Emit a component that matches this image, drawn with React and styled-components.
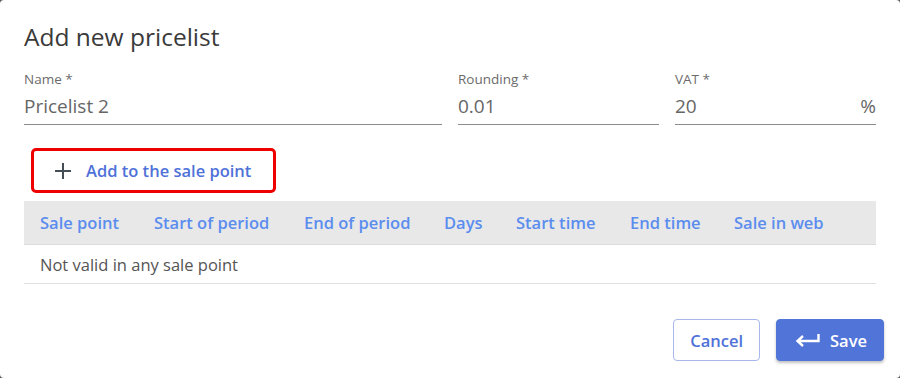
import React from 'react';
import styled, {createGlobalStyle} from 'styled-components';

const GlobalStyle = createGlobalStyle`
    html, body {
        margin: 0;
        padding: 0;
        background: #555;
    }
    body {
        font-family: "Open Sans", "Liberation Sans", sans-serif;
    }
`

const Dialog = styled.div`
    width: 900px;
    height: 378px;
    box-sizing: border-box;
    background: #fff;
    border-radius: 4px;
    padding: 20px 16px 17px 24px;
    display: flex;
    flex-direction: column;
`
const Title = styled.h2`
    margin: 0;
    font-size: 24.5px;
    font-weight: 400;
    color: #3a3a3a;
    line-height: 33px;
`
const Fields = styled.div`
    display: grid;
    grid-template-columns: repeat(4, minmax(0, 1fr));
    column-gap: 16px;
    margin-top: 17px;
    margin-right: 8px;
`
const Field = styled.div`
    grid-column: span ${p => p.span || 1};
    display: flex;
    flex-direction: column;
`
const Label = styled.label`
    font-size: 13.5px;
    color: #6b6b6b;
    line-height: 18px;
`
const InputRow = styled.div`
    display: flex;
    align-items: center;
    border-bottom: 1px solid #8c8c8c;
    height: 36px;
`
const Input = styled.input`
    flex: 1;
    min-width: 0;
    border: none;
    outline: none;
    padding: 0;
    font-family: inherit;
    font-size: 19px;
    font-weight: 400;
    color: #666;
    background: transparent;
`
const Suffix = styled.span`
    font-size: 19px;
    color: #666;
`
const AddButton = styled.button`
    align-self: flex-start;
    margin: 23px 0 0 7px;
    height: 45px;
    box-sizing: border-box;
    border: 3px solid #ee0000;
    border-radius: 5px;
    background: #fff;
    display: flex;
    align-items: center;
    gap: 14px;
    padding: 0 22px 0 20px;
    font-family: inherit;
    font-size: 16.5px;
    font-weight: 600;
    color: #4f72d9;
    cursor: pointer;
`
const Table = styled.div`
    margin-top: 8px;
    margin-right: 8px;
    display: flex;
    flex-direction: column;
`
const HeadRow = styled.div`
    display: grid;
    grid-template-columns: 114px 150px 140px 72px 114px 104px 1fr;
    align-items: center;
    height: 43px;
    padding-left: 16px;
    background: #e8e8e8;
    border-bottom: 1px solid #dcdcdc;
`
const HeadCell = styled.span`
    font-size: 16.5px;
    font-weight: 600;
    color: #5b8def;
    white-space: nowrap;
`
const BodyRow = styled.div`
    height: 38px;
    display: flex;
    align-items: center;
    padding-left: 16px;
    border-bottom: 1px solid #e0e0e0;
    font-size: 16.5px;
    color: #555;
`
const Footer = styled.div`
    margin-top: auto;
    display: flex;
    justify-content: flex-end;
    gap: 16px;
`
const Button = styled.button`
    height: 42px;
    box-sizing: border-box;
    border-radius: 4px;
    font-family: inherit;
    font-size: 16.5px;
    font-weight: 600;
    display: flex;
    align-items: center;
    gap: 10px;
    cursor: pointer;
    padding: 0 ${p => p.primary ? '16px 0 18px' : '16px'};
    border: 1px solid ${p => p.primary ? '#5174d8' : '#a8b8ec'};
    background: ${p => p.primary ? '#5174d8' : '#fff'};
    color: ${p => p.primary ? '#fff' : '#4f72d9'};
    box-shadow: ${p => p.primary ? '0 2px 3px rgba(0,0,0,0.25)' : 'none'};
`

const columns = ['Sale point', 'Start of period', 'End of period', 'Days', 'Start time', 'End time', 'Sale in web'];

export default function App() {
    return (
        <>
            <GlobalStyle />
            <Dialog>
                <Title>Add new pricelist</Title>
                <Fields>
                    <Field span={2}>
                        <Label>Name *</Label>
                        <InputRow><Input defaultValue='Pricelist 2' /></InputRow>
                    </Field>
                    <Field>
                        <Label>Rounding *</Label>
                        <InputRow><Input defaultValue='0.01' /></InputRow>
                    </Field>
                    <Field>
                        <Label>VAT *</Label>
                        <InputRow><Input defaultValue='20' /><Suffix>%</Suffix></InputRow>
                    </Field>
                </Fields>
                <AddButton>
                    <svg width='18' height='18' viewBox='0 0 18 18'>
                        <path d='M9 1v16M1 9h16' stroke='#454d55' strokeWidth='2' fill='none' />
                    </svg>
                    Add to the sale point
                </AddButton>
                <Table>
                    <HeadRow>
                        {columns.map(c => <HeadCell key={c}>{c}</HeadCell>)}
                    </HeadRow>
                    <BodyRow>Not valid in any sale point</BodyRow>
                </Table>
                <Footer>
                    <Button>Cancel</Button>
                    <Button primary>
                        <svg width='25' height='14' viewBox='0 0 25 14'>
                            <path d='M23.5 1v7H3M8 3L2.5 8 8 13' stroke='#fff' strokeWidth='2.4' fill='none' />
                        </svg>
                        Save
                    </Button>
                </Footer>
            </Dialog>
        </>
    )
}
